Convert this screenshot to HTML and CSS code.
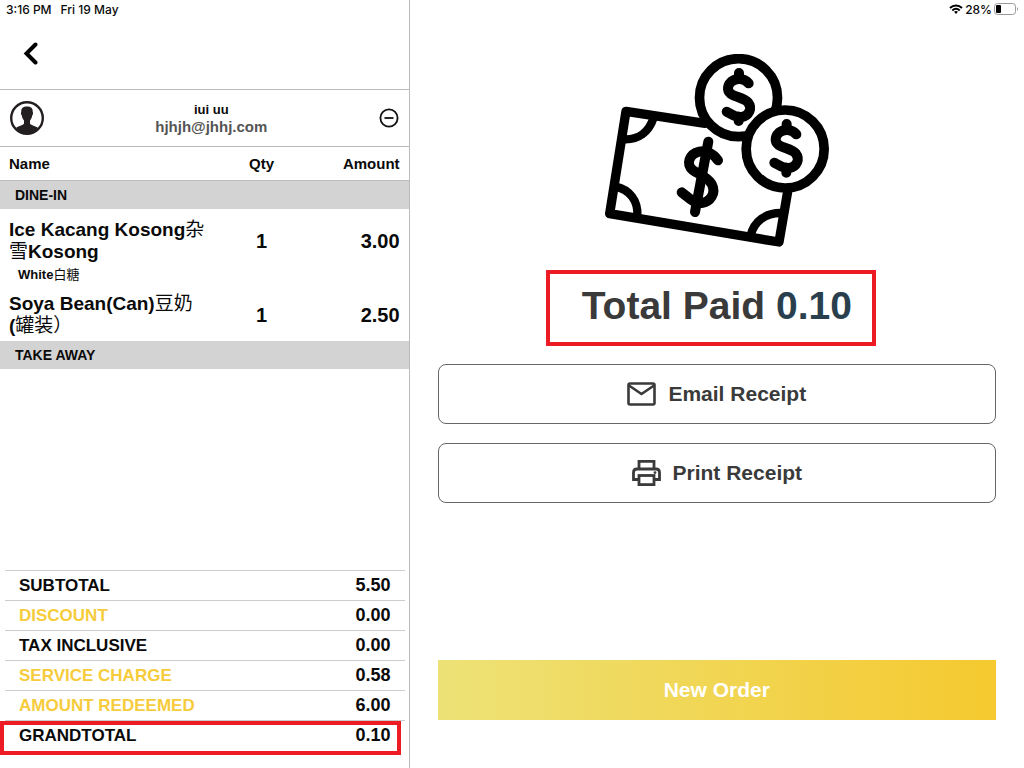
FILE: index.html
```html
<!DOCTYPE html>
<html lang="en">
<head>
    <meta charset="UTF-8">
    <meta name="viewport" content="width=device-width, initial-scale=1.0">
    <title>Total Paid</title>
    <link rel="stylesheet" href="styles.css">
</head>
<body>
    <div class="page">
        <!-- order panel -->
        <aside class="order">
            <div class="status">
                <span>3:16 PM</span>
                <span>Fri 19 May</span>
            </div>
            <header class="topbar">
                <button class="icon-btn" type="button" aria-label="Back">
                    <svg width="18" height="24" viewBox="0 0 18 24" fill="none" stroke="#000" stroke-width="4" stroke-linecap="round"><path d="M13.500 2.500L4.500 11.500L13.500 20.500" stroke-linejoin="miter"/></svg>
                </button>
            </header>
            <div class="customer">
                <svg width="34" height="34" viewBox="0 0 34 34">
                    <circle cx="17" cy="17" r="15.800" fill="#fff" stroke="#231f20" stroke-width="2.400"/>
                    <path d="M11.300 11C11 7 13.200 5.500 17 5.500S23 7 22.700 11C23.400 11.500 23 14 22.200 14.600C21.800 17 21 18.500 20 19.500V22.500C21 24.500 26 24.800 28 27C25 31 21 33 17 33S9 31 6 27C8 24.800 13 24.500 14 22.500V19.500C13 18.500 12.200 17 11.800 14.600C11 14 10.600 11.500 11.300 11Z" fill="#231f20"/>
                </svg>
                <div class="customer-info">
                    <div class="customer-name">iui uu</div>
                    <div class="customer-email">hjhjh@jhhj.com</div>
                </div>
                <button class="icon-btn" type="button" aria-label="Remove customer">
                    <svg width="20" height="20" viewBox="0 0 20 20" fill="none" stroke="#111" stroke-width="1.800"><circle cx="10" cy="10" r="8.600"/><path d="M5.500 10H14.500"/></svg>
                </button>
            </div>

            <table class="items">
                <thead>
                    <tr>
                        <th class="col-name">Name</th>
                        <th class="col-qty">Qty</th>
                        <th class="col-amount">Amount</th>
                    </tr>
                </thead>
                <tbody>
                    <tr class="section"><td colspan="3">DINE-IN</td></tr>
                    <tr class="item">
                        <td class="col-name">Ice Kacang Kosong<span class="cn">杂雪</span>Kosong</td>
                        <td class="col-qty">1</td>
                        <td class="col-amount">3.00</td>
                    </tr>
                    <tr class="option"><td colspan="3">White<span class="cn">白糖</span></td></tr>
                    <tr class="item">
                        <td class="col-name">Soya Bean(Can)<span class="cn">豆奶</span> (<span class="cn">罐装）</span></td>
                        <td class="col-qty">1</td>
                        <td class="col-amount">2.50</td>
                    </tr>
                    <tr class="section"><td colspan="3">TAKE AWAY</td></tr>
                </tbody>
            </table>

            <dl class="totals">
                <div class="row"><dt>SUBTOTAL</dt><dd>5.50</dd></div>
                <div class="row yellow"><dt>DISCOUNT</dt><dd>0.00</dd></div>
                <div class="row"><dt>TAX INCLUSIVE</dt><dd>0.00</dd></div>
                <div class="row yellow"><dt>SERVICE CHARGE</dt><dd>0.58</dd></div>
                <div class="row yellow"><dt>AMOUNT REDEEMED</dt><dd>6.00</dd></div>
                <div class="row grand"><dt>GRANDTOTAL</dt><dd>0.10</dd></div>
            </dl>
        </aside>

        <!-- payment panel -->
        <main class="payment">
            <div class="status status-right">
                <svg width="14" height="10" viewBox="0 0 14 10" fill="none" stroke="#000" stroke-width="2"><path d="M1 4C4.500 .600 9.500 .600 13 4"/><path d="M3.300 6.500C5.500 4.400 8.500 4.400 10.700 6.500"/><path d="M5 7.800Q7 6.300 9 7.800L7 10Z" fill="#000" stroke="none"/></svg>
                <span>28%</span>
                <svg width="25" height="12" viewBox="0 0 25 12"><rect x=".500" y=".500" width="21" height="11" rx="3" fill="#fff" stroke="#999"/><rect x="2" y="2" width="5" height="8" rx="1"/><path d="M23 4Q25 6 23 8Z" fill="#999"/></svg>
            </div>
            <div class="content">
                <svg class="money" width="224" height="193" viewBox="45 42 672 579" fill="none" stroke="#000" stroke-width="28" stroke-linecap="round" stroke-linejoin="round">
                    <!-- note -->
                    <path d="M345 250L108 214L59 521L567 606L593 455"/>
                    <g stroke-width="25" stroke-linecap="butt">
                        <path d="M190 236C176 276 146 300 102 298"/>
                        <path d="M76 440C118 448 145 482 142 528"/>
                        <path d="M482 586C492 545 526 518 574 519"/>
                    </g>
                    <g stroke-width="30">
                        <path d="M355 305L315 516"/>
                        <path d="M384 361C368 338 346 331 328 335C297 342 287 374 308 390C325 403 352 410 365 432C380 460 360 486 335 489C308 490 296 472 275 457"/>
                    </g>
                    <!-- coins -->
                    <circle cx="445.500" cy="173" r="117" fill="#fff" stroke-width="29"/>
                    <path d="M476 130C462 114 438 113 424 125C409 139 411 157 428 165C443 172 464 176 474 187C488 205 477 228 455 231C436 234 426 223 410 215M447 99V114M446 230V243" stroke-width="30"/>
                    <circle cx="585.500" cy="327" r="117" fill="#fff" stroke-width="29"/>
                    <path d="M619 283C605 267 581 266 567 278C552 292 554 310 571 318C586 325 607 329 617 340C631 358 620 381 598 384C579 387 569 376 553 368M590 252V267M589 383V398" stroke-width="30"/>
                </svg>
                <h1 class="total">Total Paid <span>0.10</span></h1>
                <button class="btn" type="button">
                    <svg width="29" height="24" viewBox="0 0 29 24" fill="none" stroke="#3a3a3a" stroke-width="2.600" stroke-linejoin="round"><rect x="1.500" y="1.500" width="26" height="21" rx="1.500"/><path d="M2 3.500L14.500 12L27 3.500"/></svg>
                    Email Receipt
                </button>
                <button class="btn" type="button">
                    <svg width="29" height="26" viewBox="0 0 29 26" fill="none" stroke="#3a3a3a" stroke-width="2.800"><path d="M7 9V1.400H22V9"/><path d="M7 19.500H1.500V12.500Q1.500 9 5 9H24Q27.500 9 27.500 12.500V19.500H22"/><rect x="7" y="15.500" width="15" height="9.100"/><circle cx="23" cy="12.600" r="1.400" fill="#3a3a3a" stroke="none"/></svg>
                    Print Receipt
                </button>
                <button class="btn btn-new" type="button">New Order</button>
            </div>
        </main>
    </div>
</body>
</html>
```
FILE: styles.css
```css
*{
    margin: 0;
    padding: 0;
    box-sizing: border-box;
}
body{
    font-family: "Liberation Sans", "Noto Sans CJK SC", sans-serif;
    font-weight: bold;
    color: #0a0a0a;
    background-color: #fff;
}
button{
    font: inherit;
    color: inherit;
    background: none;
    border: none;
    cursor: pointer;
}
svg{
    display: block;
    flex: none;
}
.page{
    display: flex;
    min-height: 100vh;
}
.order{
    width: 40%;
    display: flex;
    flex-direction: column;
    border-right: 1px solid #bbb;
}
.payment{
    flex: 1;
    display: flex;
    flex-direction: column;
}

/* status bar */
.status{
    display: flex;
    align-items: center;
    gap: 9px;
    height: 18px;
    padding: 0 6px;
    font: 500 12px "Inter", sans-serif;
}
.status-right{
    justify-content: flex-end;
    gap: 2px;
    padding: 0 5px;
}

/* order panel */
.topbar{
    display: flex;
    align-items: center;
    height: 72px;
    padding: 0 22px;
    border-bottom: 1px solid #bbb;
}
.customer{
    display: flex;
    align-items: center;
    height: 57px;
    padding: 0 10px;
    border-bottom: 1px solid #bbb;
}
.customer-info{
    flex: 1;
    text-align: center;
}
.customer-name{
    font-size: 13px;
    line-height: 16px;
}
.customer-email{
    font-size: 15px;
    line-height: 17px;
    color: #555;
}
.items{
    width: 100%;
    table-layout: fixed;
    border-collapse: separate;
    border-spacing: 0;
}
.items th{
    height: 34px;
    padding: 0 9px;
    font-size: 15px;
    border-bottom: 1px solid #bbb;
}
.col-name{
    width: 54%;
    text-align: left;
}
.items .col-qty{
    width: 20%;
    padding-left: 0;
    padding-right: 0;
    text-align: center;
}
.items .col-amount{
    text-align: right;
}
.section td{
    height: 28px;
    padding: 0 15px;
    font-size: 14px;
    background-color: #d3d3d3;
}
.item td{
    padding: 10px 9px 4px;
    font-size: 19px;
    line-height: 22px;
}
.item .col-qty,
.item .col-amount{
    font-size: 20px;
}
.option td{
    padding: 0 18px;
    font-size: 13px;
    line-height: 16px;
}
.cn{
    font-family: "Noto Sans CJK SC", sans-serif;
    font-weight: 400;
    /* keeps the taller CJK font from stretching the line */
    line-height: 0;
}
.totals{
    margin-top: auto;
    padding: 0 4px 18px 5px;
    font-size: 17px;
}
.row{
    display: flex;
    justify-content: space-between;
    align-items: center;
    height: 30px;
    padding: 0 14px;
    border-top: 1px solid #ccc;
}
.totals dd{
    font-size: 18px;
}
.yellow dt{
    color: #f6cc3c;
}
/* highlight around the grand total */
.grand{
    position: relative;
}
.grand::after{
    content: "";
    position: absolute;
    top: 0;
    right: 4px;
    bottom: -5px;
    left: -5px;
    border: 4px solid #ed1c24;
}

/* payment panel */
.content{
    flex: 1;
    display: flex;
    flex-direction: column;
    align-items: center;
    padding: 36px 28px 48px;
}
.total{
    margin: 23px 12px 18px 0;
    padding: 9px 20px 14px 32px;
    border: 4px solid #ed1c24;
    font-size: 39px;
    line-height: 45px;
    color: #3a3a3a;
}
.total span{
    color: #2a3f4d;
}
.btn{
    display: flex;
    justify-content: center;
    align-items: center;
    gap: 12px;
    width: 100%;
    height: 60px;
    margin-bottom: 19px;
    border: 1px solid #666;
    border-radius: 8px;
    font-size: 21px;
    color: #3a3a3a;
}
.btn-new{
    margin: auto 0 0;
    border: none;
    border-radius: 0;
    color: #fff;
    background: linear-gradient(to right, #ede277, #f5c92f);
}
```
